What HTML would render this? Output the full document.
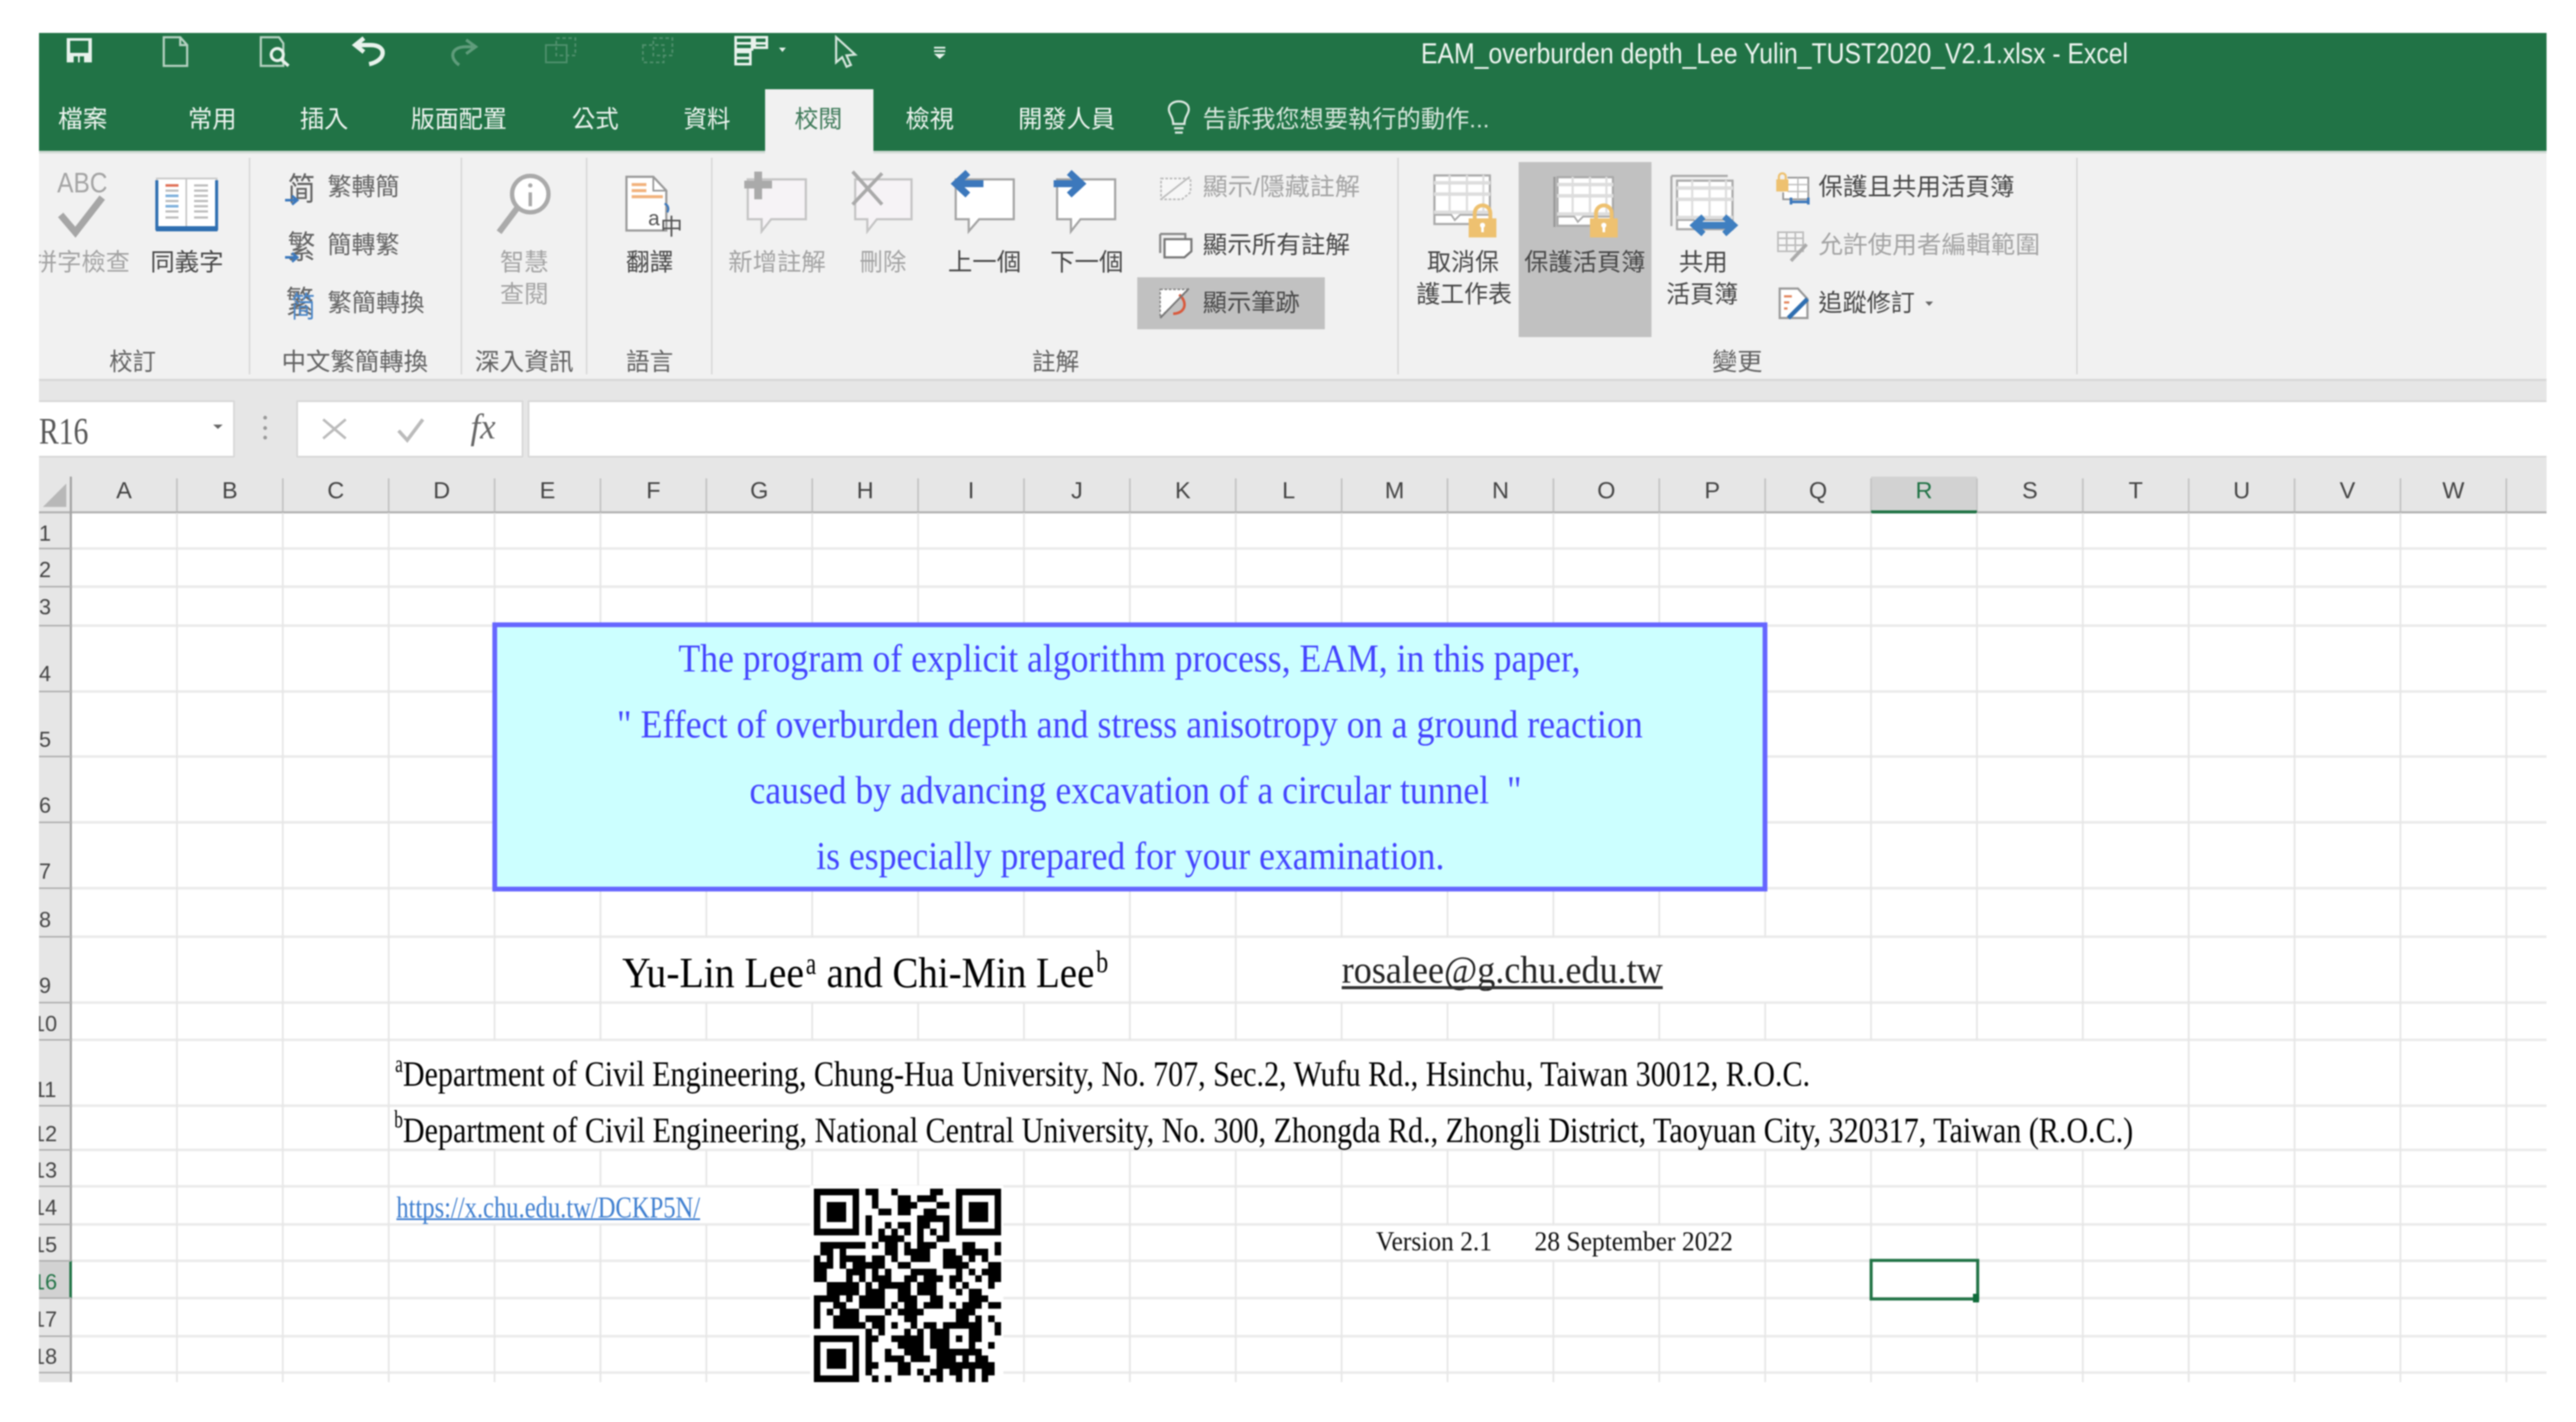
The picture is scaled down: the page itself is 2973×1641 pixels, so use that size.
<!DOCTYPE html>
<html><head><meta charset="utf-8"><title>Excel</title>
<style>
html,body{margin:0;padding:0;background:#fff;width:2973px;height:1641px;overflow:hidden}
svg{display:block;filter:blur(.9px)}
.c{font-family:"Liberation Sans","Noto Sans CJK TC",sans-serif;font-size:28px}
.s{font-family:"Liberation Serif","Noto Serif CJK SC",serif}
.a{font-family:"Liberation Sans",sans-serif}
.t{fill:#eef5f0}.k{fill:#484848}.g{fill:#a4a4a4}.m{fill:#626262}
.h{font-family:"Liberation Sans",sans-serif;font-size:27px;fill:#444;text-anchor:middle}
.r{font-family:"Liberation Sans",sans-serif;font-size:25px;fill:#444;text-anchor:middle}
</style></head><body>
<svg xmlns="http://www.w3.org/2000/svg" width="2973" height="1641" viewBox="0 0 2973 1641">
<defs>
<clipPath id="cl"><rect x="45" y="38" width="2894" height="1557"/></clipPath>
<g id="sheet"><rect x=".5" y=".5" width="64" height="56" fill="#fff" stroke="#aaa" stroke-width="2.500"/><path d="M0 9H65M0 22H65M0 43H65" stroke="#ddd" stroke-width="4"/><path d="M18 0V45M38 0V45M57 0V45" stroke="#ddd" stroke-width="2.500"/><path d="M0 46H20L24 52L30 46H65" stroke="#aaa" stroke-width="2" fill="none"/></g>
<g id="lock"><rect x="0" y="15" width="32" height="22" fill="#eec170"/><path d="M7 15V9a9 9 0 0 1 18 0V15" fill="none" stroke="#eec170" stroke-width="4.500"/><circle cx="16" cy="23" r="3" fill="#fff"/><rect x="14.500" y="23" width="3" height="8" fill="#fff"/></g>
</defs>
<g clip-path="url(#cl)">
<!-- title bar -->
<rect x="0" y="38" width="2973" height="136" fill="#217346"/>
<rect x="0" y="174" width="2973" height="3" fill="#cfd9d3"/>
<rect x="0" y="177" width="2973" height="260" fill="#f1f1f1"/>
<rect x="0" y="437" width="2973" height="3" fill="#dadada"/>
<rect x="0" y="440" width="2973" height="152" fill="#e6e6e6"/>
<rect x="883" y="103" width="125" height="74" fill="#f1f1f1"/>

<!-- QAT icons -->
<g fill="none" stroke="#e8f2ec" stroke-width="2.500">
<path d="M77 44H106V72H77Z" fill="#e8f2ec" stroke="none"/><rect x="81" y="47" width="21" height="14" fill="#217346" stroke="none"/><rect x="85" y="65" width="12" height="7" fill="#217346" stroke="none"/><rect x="90" y="65" width="2" height="7" fill="#e8f2ec" stroke="none"/>
<path d="M189 43H208L216 52V76H189Z M208 43V52H216" stroke="#b5d2c1"/>
<path d="M301 43H322L327 50V76H301Z" stroke="#b5d2c1"/><circle cx="320" cy="63" r="7" stroke-width="3.500"/><path d="M325 69L333 76" stroke-width="3.500"/>
<path d="M420 44L410 52L420 60M411 52H428C447 52 446 70 426 74" stroke-width="5"/>
<path d="M538 46L549 54L538 62M548 54H538C519 54 519 68 530 75" stroke="#5f9c7b" stroke-width="3.500"/>
<g stroke="#4f8f6c" stroke-width="2"><rect x="630" y="52" width="24" height="20"/><rect x="642" y="44" width="22" height="20" stroke-dasharray="4 3"/><rect x="742" y="52" width="24" height="20" stroke-dasharray="4 3"/><rect x="754" y="44" width="22" height="20" stroke-dasharray="4 3"/></g>
<path d="M849 43H868V57H849ZM871 43H885V55H871ZM849 60H866V74H849ZM849 50H885M849 67H866" stroke-width="3"/>
<path d="M965 43V72L972 66L977 77L982 75L977 64L987 63Z" stroke="#d4e5db"/>
</g>
<path d="M899 55H907L903 60Z" fill="#e8f2ec"/>
<path d="M1078 55H1091M1078 59H1091" stroke="#e8f2ec" stroke-width="2" fill="none"/><path d="M1078 62H1091L1084.500 68Z" fill="#e8f2ec"/>
<text class="a t" x="1640" y="73" font-size="33" textLength="816" lengthAdjust="spacingAndGlyphs">EAM_overburden depth_Lee Yulin_TUST2020_V2.1.xlsx - Excel</text>

<!-- tabs -->
<g class="c t" font-size="28">
<text x="67" y="147" textLength="57" lengthAdjust="spacingAndGlyphs">檔案</text>
<text x="217" y="147" textLength="56" lengthAdjust="spacingAndGlyphs">常用</text>
<text x="346" y="147" textLength="56" lengthAdjust="spacingAndGlyphs">插入</text>
<text x="474" y="147" textLength="111" lengthAdjust="spacingAndGlyphs">版面配置</text>
<text x="660" y="147" textLength="54" lengthAdjust="spacingAndGlyphs">公式</text>
<text x="789" y="147" textLength="54" lengthAdjust="spacingAndGlyphs">資料</text>
<text x="1045" y="147" textLength="56" lengthAdjust="spacingAndGlyphs">檢視</text>
<text x="1175" y="147" textLength="112" lengthAdjust="spacingAndGlyphs">開發人員</text>
<text x="1388" y="147" textLength="331" lengthAdjust="spacingAndGlyphs" style="fill:#d6e6dc">告訴我您想要執行的動作...</text>
</g>
<text class="c" x="917" y="147" textLength="55" lengthAdjust="spacingAndGlyphs" fill="#3f7a5a">校閱</text>
<path d="M1354 143C1354 134 1349 132 1349 126C1349 114 1372 114 1372 126C1372 132 1367 134 1367 143ZM1355 148H1366M1356 153H1365" fill="none" stroke="#dce9e1" stroke-width="2.500"/>

<!-- group separators -->
<path d="M288 182V432M532.500 182V432M677 182V432M821.500 182V432M1613.500 182V432M2397 182V432" stroke="#dadada" stroke-width="2" fill="none"/>

<!-- highlights -->
<rect x="1312.500" y="320" width="216.500" height="60" fill="#c1c1c1"/>
<rect x="1752.700" y="187" width="153.300" height="202" fill="#c1c1c1"/>

<!-- proofing -->
<text class="a g" x="66" y="222" font-size="32" textLength="58" lengthAdjust="spacingAndGlyphs">ABC</text>
<path d="M70 248L87 268L118 228" fill="none" stroke="#a6a6a6" stroke-width="8"/>
<path d="M181 206H215V262H181ZM215 206H250V262H215Z" fill="#fff" stroke="#c8c8c8" stroke-width="2"/>
<path d="M181 208V264H250V208" fill="none" stroke="#2f6fb1" stroke-width="3.500"/><rect x="180" y="261" width="71" height="6" fill="#2f6fb1"/>
<path d="M191 214H206" stroke="#e0735a" stroke-width="3"/><path d="M191 226H206M191 238H206" stroke="#7fb0dc" stroke-width="3"/><path d="M191 220H206M191 232H206M191 244H206M191 251H206M224 214H240M224 220H240M224 226H240M224 232H240M224 238H240M224 244H240M224 251H240" stroke="#bbb" stroke-width="2.500"/>
<text class="c g" x="38" y="312" textLength="112" lengthAdjust="spacingAndGlyphs">拼字檢查</text>
<text class="c k" x="173.500" y="312" textLength="84.500" lengthAdjust="spacingAndGlyphs">同義字</text>
<text class="c m" x="126" y="427" textLength="54" lengthAdjust="spacingAndGlyphs">校訂</text>

<!-- chinese conv -->
<text class="c m" x="332" y="231" style="font-size:37px" textLength="32" lengthAdjust="spacingAndGlyphs">简</text>
<text class="c m" x="332" y="298" style="font-size:37px" textLength="32" lengthAdjust="spacingAndGlyphs">繁</text>
<text class="c m" x="330" y="361" style="font-size:36px" textLength="32" lengthAdjust="spacingAndGlyphs">繁</text>
<text class="c" x="336" y="366" style="font-size:34px" fill="#4a86c8" textLength="28" lengthAdjust="spacingAndGlyphs">简</text>
<path d="M329 231H342M337 226L343 231L337 236M329 297H342M337 292L343 297L337 302" fill="none" stroke="#3c78bc" stroke-width="3"/>
<text class="c m" x="378" y="225" textLength="83" lengthAdjust="spacingAndGlyphs">繁轉簡</text>
<text class="c m" x="378" y="292" textLength="83" lengthAdjust="spacingAndGlyphs">簡轉繁</text>
<text class="c m" x="378" y="359" textLength="112" lengthAdjust="spacingAndGlyphs">繁簡轉換</text>
<text class="c m" x="325" y="427" textLength="169" lengthAdjust="spacingAndGlyphs">中文繁簡轉換</text>

<!-- insights -->
<circle cx="612" cy="224" r="21" fill="#fff" stroke="#aaa" stroke-width="5"/>
<path d="M597 240L576 268" stroke="#aaa" stroke-width="7"/><path d="M612 222V238" stroke="#aaa" stroke-width="4"/><circle cx="612" cy="214" r="2.500" fill="#aaa"/>
<text class="c g" x="577" y="312" textLength="56" lengthAdjust="spacingAndGlyphs">智慧</text>
<text class="c g" x="577" y="349" textLength="56" lengthAdjust="spacingAndGlyphs">查閱</text>
<text class="c m" x="548" y="427" textLength="114" lengthAdjust="spacingAndGlyphs">深入資訊</text>

<!-- translate -->
<path d="M723 204H754L769 220V266H723Z" fill="#fff" stroke="#9a9a9a" stroke-width="2.500"/><path d="M754 204V220H769" fill="none" stroke="#9a9a9a" stroke-width="2"/>
<path d="M729 213H746M729 220H746M729 227H765" stroke="#f2b27c" stroke-width="3.500"/>
<path d="M767 235C772 237 772 242 770 245" fill="none" stroke="#3c78bc" stroke-width="2.500"/>
<text class="a" x="748" y="260" font-size="24" fill="#555">a</text><text class="c" x="762" y="271" style="font-size:26px" fill="#555">中</text>
<text class="c k" x="722.500" y="312" textLength="54.500" lengthAdjust="spacingAndGlyphs">翻譯</text>
<text class="c m" x="722.500" y="427" textLength="54.500" lengthAdjust="spacingAndGlyphs">語言</text>

<!-- comments -->
<g stroke-width="2.500">
<path d="M863 207H930V253H890L879 267V253H863Z" fill="#f6f3f6" stroke="#c4c4c4"/>
<path d="M987 207H1052V253H1012L1001 267V253H987Z" fill="#f6f3f6" stroke="#c4c4c4"/>
<path d="M1103 207H1170V253H1130L1118 267V253H1103Z" fill="#fff" stroke="#a4a4a4"/>
<path d="M1220 207H1287V253H1247L1236 267V253H1220Z" fill="#fff" stroke="#a4a4a4"/>
</g>
<path d="M875 198V230M859 213H891" stroke="#aaa" stroke-width="9"/>
<path d="M984 198L1018 236M1018 200L984 236" stroke="#aaa" stroke-width="4" fill="none"/>
<path d="M1135 212H1106M1117 199L1103 212L1117 225" fill="none" stroke="#3c78bc" stroke-width="8"/>
<path d="M1216 212H1246M1234 199L1248 212L1234 225" fill="none" stroke="#3c78bc" stroke-width="8"/>
<text class="c g" x="840.500" y="312" textLength="112.500" lengthAdjust="spacingAndGlyphs">新增註解</text>
<text class="c g" x="992" y="312" textLength="54" lengthAdjust="spacingAndGlyphs">刪除</text>
<text class="c k" x="1094" y="312" textLength="84.500" lengthAdjust="spacingAndGlyphs">上一個</text>
<text class="c k" x="1212" y="312" textLength="84.500" lengthAdjust="spacingAndGlyphs">下一個</text>
<path d="M1340 206H1374V222L1364 230H1340Z" fill="#f6f6f6" stroke="#bbb" stroke-width="2" stroke-dasharray="3 2"/><path d="M1341 229L1373 204" stroke="#bbb" stroke-width="2"/>
<path d="M1339 270H1368V276M1339 270V292" fill="none" stroke="#888" stroke-width="2.500"/><path d="M1344 276H1375V290L1367 297H1344Z" fill="#fff" stroke="#777" stroke-width="2.500"/>
<path d="M1339 334H1372L1339 366Z" fill="#fff" stroke="#777" stroke-width="1.500" stroke-dasharray="3 2"/><path d="M1361 340C1372 350 1367 362 1354 362" fill="none" stroke="#d9593c" stroke-width="3"/><path d="M1372 333L1339 367" stroke="#777" stroke-width="2"/>
<text class="c g" x="1388" y="225" textLength="181.500" lengthAdjust="spacingAndGlyphs">顯示/隱藏註解</text>
<text class="c k" x="1388" y="292" textLength="170" lengthAdjust="spacingAndGlyphs">顯示所有註解</text>
<text class="c k" x="1388" y="359" textLength="112" lengthAdjust="spacingAndGlyphs">顯示筆跡</text>
<text class="c m" x="1191" y="427" textLength="54.500" lengthAdjust="spacingAndGlyphs">註解</text>

<!-- changes -->
<use href="#sheet" x="1655" y="202"/><use href="#lock" x="1695" y="237"/>
<use href="#sheet" x="1797" y="204"/><path d="M1794 204V262" stroke="#999" stroke-width="2.500"/><use href="#lock" x="1835" y="237"/>
<path d="M1929 203H1994" stroke="#aaa" stroke-width="2.500"/><path d="M1929 203V261" stroke="#aaa" stroke-width="2.500"/><use href="#sheet" x="1935" y="208"/>
<path d="M1960 260H1996" stroke="#3f7fc0" stroke-width="8"/><path d="M1966 250L1955 260L1966 270M1990 250L2001 260L1990 270" fill="none" stroke="#3f7fc0" stroke-width="7"/>
<text class="c k" x="1647" y="312" textLength="83" lengthAdjust="spacingAndGlyphs">取消保</text>
<text class="c k" x="1634.500" y="349" textLength="110.500" lengthAdjust="spacingAndGlyphs">護工作表</text>
<text class="c k" x="1759" y="312" textLength="140" lengthAdjust="spacingAndGlyphs">保護活頁簿</text>
<text class="c k" x="1937.500" y="312" textLength="56.500" lengthAdjust="spacingAndGlyphs">共用</text>
<text class="c k" x="1923" y="349" textLength="83" lengthAdjust="spacingAndGlyphs">活頁簿</text>

<path d="M2063 205H2087V230H2058V222" fill="#fff" stroke="#999" stroke-width="2"/><path d="M2075 205V230M2063 213H2087M2063 221H2087" stroke="#bbb" stroke-width="1.500"/>
<rect x="2050" y="207" width="14" height="14" fill="#eec170"/><path d="M2053 207V204a4 4 0 0 1 8 0V207" fill="none" stroke="#eec170" stroke-width="2.500"/>
<path d="M2067 233H2087M2067 228V236M2087 228V236" stroke="#3c78bc" stroke-width="3"/>
<path d="M2052 268H2081V290H2052ZM2062 268V290M2072 268V290M2052 275H2081M2052 283H2081" fill="#f6f6f6" stroke="#bdbdbd" stroke-width="2"/>
<path d="M2085 282L2067 301" stroke="#aaa" stroke-width="4"/>
<path d="M2054 333H2075L2086 345V367H2054Z" fill="#fff" stroke="#999" stroke-width="2.500"/>
<path d="M2059 342H2068M2059 349H2065M2059 356H2063" stroke="#e2825a" stroke-width="2.500"/>
<path d="M2086 345L2064 367" stroke="#2f6fb1" stroke-width="5"/>
<text class="c k" x="2098.600" y="225" textLength="226.400" lengthAdjust="spacingAndGlyphs">保護且共用活頁簿</text>
<text class="c g" x="2098.600" y="292" textLength="255.800" lengthAdjust="spacingAndGlyphs">允許使用者編輯範圍</text>
<text class="c k" x="2098.600" y="359" textLength="111.400" lengthAdjust="spacingAndGlyphs">追蹤修訂</text>
<path d="M2222 348H2231L2226.500 353Z" fill="#666"/>
<text class="c m" x="1976" y="427" textLength="58" lengthAdjust="spacingAndGlyphs">變更</text>

<!-- formula bar -->
<rect x="0" y="463" width="270" height="64" fill="#fff" stroke="#d8d8d8" stroke-width="2"/>
<text class="s" x="45" y="512" font-size="43" fill="#555" textLength="57" lengthAdjust="spacingAndGlyphs">R16</text>
<path d="M246 490H257L251.500 495Z" fill="#666"/>
<circle cx="306" cy="482" r="2.200" fill="#999"/><circle cx="306" cy="494" r="2.200" fill="#999"/><circle cx="306" cy="505" r="2.200" fill="#999"/>
<rect x="343" y="463" width="260" height="64" fill="#fff" stroke="#d8d8d8" stroke-width="2"/>
<rect x="610" y="463" width="2400" height="64" fill="#fff" stroke="#d8d8d8" stroke-width="2"/>
<path d="M373 484L399 506M399 484L373 506" stroke="#bbb" stroke-width="3"/>
<path d="M460 497L470 508L488 484" fill="none" stroke="#bbb" stroke-width="4"/>
<text class="s" x="543" y="506" font-size="41" font-style="italic" fill="#666" textLength="29" lengthAdjust="spacingAndGlyphs">fx</text>

<!-- headers -->
<rect x="0" y="592" width="82" height="1010" fill="#e6e6e6"/>
<rect x="2159.400" y="550" width="122.200" height="42" fill="#d2d2d2"/>
<rect x="0" y="1455" width="82" height="43" fill="#d2d2d2"/>
<path d="M76.500 558V585H49.500Z" fill="#b8b8b8"/>
<path d="M204.200 552V590M326.400 552V590M448.600 552V590M570.800 552V590M693 552V590M815.200 552V590M937.400 552V590M1059.600 552V590M1181.800 552V590M1304 552V590M1426.200 552V590M1548.400 552V590M1670.600 552V590M1792.800 552V590M1915 552V590M2037.200 552V590M2159.400 552V590M2281.600 552V590M2403.800 552V590M2526 552V590M2648.200 552V590M2770.400 552V590M2892.600 552V590" stroke="#c4c4c4" stroke-width="2" fill="none"/>
<rect x="45" y="590" width="2894" height="2.500" fill="#b4b4b4"/>
<rect x="80.500" y="550" width="2.500" height="1045" fill="#a4a4a4"/>
<rect x="2159.400" y="589" width="122.200" height="3.500" fill="#217346"/>
<rect x="80" y="1455" width="3.500" height="43" fill="#217346"/>
<path d="M45 633H82M45 677H82M45 722H82M45 798H82M45 873H82M45 949H82M45 1025H82M45 1081H82M45 1157H82M45 1200H82M45 1276H82M45 1327H82M45 1369H82M45 1413H82M45 1455H82M45 1498H82M45 1542H82M45 1584H82" stroke="#b4b4b4" stroke-width="2" fill="none"/>
<g>
<text class="h" x="143.100" y="575">A</text><text class="h" x="265.300" y="575">B</text><text class="h" x="387.500" y="575">C</text><text class="h" x="509.700" y="575">D</text><text class="h" x="631.900" y="575">E</text><text class="h" x="754.100" y="575">F</text><text class="h" x="876.300" y="575">G</text><text class="h" x="998.500" y="575">H</text><text class="h" x="1120.700" y="575">I</text><text class="h" x="1242.900" y="575">J</text><text class="h" x="1365.100" y="575">K</text><text class="h" x="1487.300" y="575">L</text><text class="h" x="1609.500" y="575">M</text><text class="h" x="1731.700" y="575">N</text><text class="h" x="1853.900" y="575">O</text><text class="h" x="1976.100" y="575">P</text><text class="h" x="2098.300" y="575">Q</text><text class="h" x="2220.500" y="575" style="fill:#217346">R</text><text class="h" x="2342.700" y="575">S</text><text class="h" x="2464.900" y="575">T</text><text class="h" x="2587.100" y="575">U</text><text class="h" x="2709.300" y="575">V</text><text class="h" x="2831.500" y="575">W</text>
</g>
<g>
<text class="r" x="52" y="624">1</text><text class="r" x="52" y="666">2</text><text class="r" x="52" y="709">3</text><text class="r" x="52" y="786">4</text><text class="r" x="52" y="862">5</text><text class="r" x="52" y="938">6</text><text class="r" x="52" y="1014">7</text><text class="r" x="52" y="1070">8</text><text class="r" x="52" y="1146">9</text><text class="r" x="52" y="1190">10</text><text class="r" x="52" y="1266">11</text><text class="r" x="52" y="1317">12</text><text class="r" x="52" y="1359">13</text><text class="r" x="52" y="1402">14</text><text class="r" x="52" y="1445">15</text><text class="r" x="52" y="1488" style="fill:#217346">16</text><text class="r" x="52" y="1531">17</text><text class="r" x="52" y="1574">18</text>
</g>

<!-- grid -->
<rect x="83" y="592.500" width="2900" height="1002.500" fill="#fff"/>
<path d="M83 633H2939M83 677H2939M83 722H2939M83 798H2939M83 873H2939M83 949H2939M83 1025H2939M83 1081H2939M83 1157H2939M83 1200H2939M83 1276H2939M83 1327H2939M83 1369H2939M83 1413H2939M83 1455H2939M83 1498H2939M83 1542H2939M83 1584H2939" stroke="#ebebeb" stroke-width="3" fill="none"/>
<path fill="none" stroke="#e6e6e6" stroke-width="2" d="M204.200 592V1595M326.400 592V1595M448.600 592V1595
M570.800 592V1200M570.800 1327V1369M570.800 1413V1595
M693 592V1200M693 1327V1369M693 1413V1595
M815.200 592V1081M815.200 1157V1200M815.200 1327V1369M815.200 1413V1595
M937.400 592V1081M937.400 1157V1200M937.400 1327V1595
M1059.600 592V1081M1059.600 1157V1200M1059.600 1327V1595
M1181.800 592V1081M1181.800 1157V1200M1181.800 1327V1595
M1304 592V1200M1304 1327V1595M1426.200 592V1200M1426.200 1327V1595
M1548.400 592V1081M1548.400 1157V1200M1548.400 1327V1595
M1670.600 592V1081M1670.600 1157V1200M1670.600 1327V1413M1670.600 1455V1595
M1792.800 592V1081M1792.800 1157V1200M1792.800 1327V1413M1792.800 1455V1595
M1915 592V1081M1915 1157V1200M1915 1327V1413M1915 1455V1595
M2037.200 592V1081M2037.200 1157V1200M2037.200 1327V1595
M2159.400 592V1200M2159.400 1327V1595M2281.600 592V1200M2281.600 1327V1595M2403.800 592V1200M2403.800 1327V1595
M2526 592V1595M2648.200 592V1595M2770.400 592V1595M2892.600 592V1595"/>

<!-- blue box -->
<rect x="571" y="721" width="1466" height="305" fill="#ccffff" stroke="#6666ff" stroke-width="5.500"/>
<g class="s" font-size="45" fill="#4444ff">
<text x="783" y="775" textLength="1041" lengthAdjust="spacingAndGlyphs">The program of explicit algorithm process, EAM, in this paper,</text>
<text x="712" y="851" textLength="1184" lengthAdjust="spacingAndGlyphs">" Effect of overburden depth and stress anisotropy on a ground reaction</text>
<text x="865" y="927" textLength="891" lengthAdjust="spacingAndGlyphs">caused by advancing excavation of a circular tunnel &#160;"</text>
<text x="942" y="1003" textLength="725" lengthAdjust="spacingAndGlyphs">is especially prepared for your examination.</text>
</g>

<!-- authors -->
<g class="s" fill="#000">
<text x="718" y="1139" font-size="50" textLength="210" lengthAdjust="spacingAndGlyphs">Yu-Lin Lee</text>
<text x="930" y="1124" font-size="36" textLength="12" lengthAdjust="spacingAndGlyphs">a</text>
<text x="954" y="1139" font-size="50" textLength="309" lengthAdjust="spacingAndGlyphs">and Chi-Min Lee</text>
<text x="1265" y="1122" font-size="36" textLength="14" lengthAdjust="spacingAndGlyphs">b</text>
<text x="1548.500" y="1134" font-size="44" fill="#222" textLength="370.500" lengthAdjust="spacingAndGlyphs">rosalee@g.chu.edu.tw</text>
</g>
<rect x="1548.500" y="1138" width="370.500" height="3.500" fill="#333"/>

<!-- affiliations -->
<g class="s" fill="#000">
<text x="456" y="1237" font-size="29" textLength="9" lengthAdjust="spacingAndGlyphs">a</text>
<text x="465" y="1253" font-size="41" textLength="1624" lengthAdjust="spacingAndGlyphs">Department of Civil Engineering, Chung-Hua University, No. 707, Sec.2, Wufu Rd., Hsinchu, Taiwan 30012, R.O.C.</text>
<text x="455" y="1301" font-size="29" textLength="10" lengthAdjust="spacingAndGlyphs">b</text>
<text x="465" y="1318" font-size="41" textLength="1997" lengthAdjust="spacingAndGlyphs">Department of Civil Engineering, National Central University, No. 300, Zhongda Rd., Zhongli District, Taoyuan City, 320317, Taiwan (R.O.C.)</text>
</g>
<text class="s" x="457.500" y="1405" font-size="35" fill="#3f7fd0" textLength="350.500" lengthAdjust="spacingAndGlyphs">https://x.chu.edu.tw/DCKP5N/</text>
<rect x="457.500" y="1406" width="350.500" height="2" fill="#3f7fd0"/>
<g class="s" font-size="32" fill="#111">
<text x="1588" y="1443" textLength="134" lengthAdjust="spacingAndGlyphs">Version 2.1</text>
<text x="1771" y="1443" textLength="229" lengthAdjust="spacingAndGlyphs">28 September 2022</text>
</g>

<!-- QR -->
<rect x="935" y="1368" width="223" height="232" fill="#fff"/>
<g transform="translate(939.300 1371.700) scale(7.450 7.700)">
<path fill="#000" fill-rule="evenodd" d="M0 0H7V7H0ZM1 1V6H6V1ZM2 2H5V5H2ZM22 0H29V7H22ZM23 1V6H28V1ZM24 2H27V5H24ZM0 22H7V29H0ZM1 23V28H6V23ZM2 24H5V27H2Z"/>
<path fill="none" stroke="#000" stroke-width="1" d="M8 .5h2M12 .5h1M18 .5h2
M9 1.500h1M13 1.500h2M16 1.500h3
M9 2.500h1M13 2.500h3M19 2.500h2
M10 3.500h2M13 3.500h2M17 3.500h2
M8 4.500h1M16 4.500h5
M8 5.500h1M11 5.500h1M13 5.500h2M16 5.500h2M20 5.500h1
M8 6.500h1M10 6.500h1M12 6.500h1M14 6.500h1M16 6.500h1M18 6.500h1M20 6.500h1
M10 7.500h4M16 7.500h1M19 7.500h2
M1 8.500h7M9 8.500h1M11 8.500h2M14 8.500h1M16 8.500h3M23 8.500h2M28 8.500h1
M1 9.500h2M4 9.500h1M11 9.500h2M14 9.500h4M20 9.500h2M23 9.500h4M28 9.500h1
M0 10.500h1M2 10.500h1M4 10.500h4M9 10.500h2M12 10.500h1M15 10.500h3M20 10.500h3M24 10.500h1M26 10.500h1
M0 11.500h3M4 11.500h1M6 11.500h5M13 11.500h2M20 11.500h4M27 11.500h2
M0 12.500h2M5 12.500h3M9 12.500h1M11 12.500h1M15 12.500h4M22 12.500h1M24 12.500h1M26 12.500h3
M0 13.500h2M5 13.500h1M7 13.500h1M9 13.500h3M14 13.500h2M17 13.500h2M19 13.500h1M21 13.500h2M25 13.500h1M27 13.500h2
M2 14.500h5M8 14.500h1M10 14.500h4M14 14.500h1M16 14.500h3M21 14.500h1M23 14.500h1M27 14.500h1
M2 15.500h4M6 15.500h1M8 15.500h3M13 15.500h2M16 15.500h3M22 15.500h1M24 15.500h2
M0 16.500h4M5 16.500h1M7 16.500h4M13 16.500h2M15 16.500h1M18 16.500h2M24 16.500h3
M0 17.500h1M3 17.500h2M7 17.500h4M12 17.500h1M14 17.500h2M17 17.500h3M21 17.500h1M23 17.500h3M27 17.500h2
M0 18.500h1M2 18.500h1M4 18.500h3M11 18.500h1M13 18.500h4M22 18.500h3
M0 19.500h1M3 19.500h4M8 19.500h3M14 19.500h2M22 19.500h2M25 19.500h1M27 19.500h1
M0 20.500h1M3 20.500h5M9 20.500h2M12 20.500h1M15 20.500h1M17 20.500h2M20 20.500h6M28 20.500h1
M8 21.500h1M10 21.500h1M14 21.500h1M16 21.500h1M18 21.500h3M24 21.500h2M28 21.500h1
M8 22.500h2M12 22.500h5M18 22.500h3M22 22.500h1M24 22.500h2
M8 23.500h1M13 23.500h4M18 23.500h3M24 23.500h1M27 23.500h1
M8 24.500h1M11 24.500h1M14 24.500h3M19 24.500h7
M8 25.500h1M11 25.500h3M15 25.500h3M19 25.500h3M23 25.500h1M25 25.500h2
M8 26.500h2M13 26.500h2M19 26.500h9
M8 27.500h1M13 27.500h2M16 27.500h1M18 27.500h2M21 27.500h2M24 27.500h1M26 27.500h2
M9 28.500h1M11 28.500h1M17 28.500h1M19 28.500h1M22 28.500h1M24 28.500h1M26 28.500h1"/>
</g>

<!-- selection -->
<rect x="2159.500" y="1454.500" width="123" height="44.500" fill="none" stroke="#217346" stroke-width="3.500"/>
<rect x="2277" y="1493" width="7" height="10" fill="#0f6b3a"/>
</g>
</svg>
</body></html>
